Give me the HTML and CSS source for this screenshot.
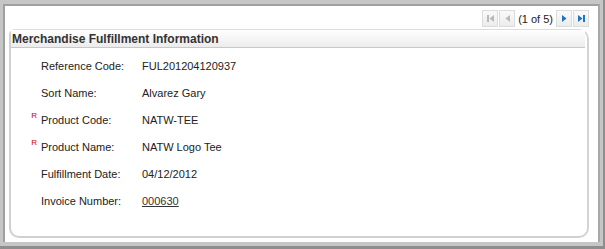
FILE: index.html
```html
<!DOCTYPE html>
<html>
<head>
<meta charset="utf-8">
<link rel="stylesheet" href="styles.css">
</head>
<body>
<div class="frame">
  <div class="inner">
    <div class="pager">
      <span class="pbtn disabled"><svg width="9" height="9" viewBox="0 0 9 9"><rect x="1" y="1" width="2" height="7" fill="#b9b9b9"/><path d="M8 1 L3.5 4.5 L8 8 Z" fill="#b9b9b9"/></svg></span>
      <span class="pbtn disabled"><svg width="9" height="9" viewBox="0 0 9 9"><path d="M7 1 L2.5 4.5 L7 8 Z" fill="#b9b9b9"/></svg></span>
      <span class="ptext">(1 of 5)</span>
      <span class="pbtn"><svg width="9" height="9" viewBox="0 0 9 9"><path d="M2 1 L6.5 4.5 L2 8 Z" fill="#1a74c9"/></svg></span>
      <span class="pbtn"><svg width="9" height="9" viewBox="0 0 9 9"><path d="M1 1 L5.5 4.5 L1 8 Z" fill="#1a74c9"/><rect x="6" y="1" width="2" height="7" fill="#1a74c9"/></svg></span>
    </div>
    <div class="panel">
      <div class="panel-head">Merchandise Fulfillment Information</div>
      <div class="rows">
        <div class="row"><span class="req"></span><span class="label">Reference Code:</span><span class="value">FUL201204120937</span></div>
        <div class="row"><span class="req"></span><span class="label">Sort Name:</span><span class="value">Alvarez Gary</span></div>
        <div class="row"><span class="req">R</span><span class="label">Product Code:</span><span class="value">NATW-TEE</span></div>
        <div class="row"><span class="req">R</span><span class="label">Product Name:</span><span class="value">NATW Logo Tee</span></div>
        <div class="row"><span class="req"></span><span class="label">Fulfillment Date:</span><span class="value">04/12/2012</span></div>
        <div class="row"><span class="req"></span><span class="label">Invoice Number:</span><span class="value"><a href="#" class="link">000630</a></span></div>
      </div>
    </div>
  </div>
</div>
</body>
</html>
```

FILE: styles.css
```css
html, body {
  margin: 0;
  padding: 0;
  background: #c6c6c6;
}
.frame {
  width: 605px;
  height: 249px;
  box-sizing: border-box;
  background: #c6c6c6;
  padding: 4px 0 0 3px;
  border-right: 2px solid #8e8e8e;
  border-bottom: 3px solid #8e8e8e;
}
.inner {
  width: 597px;
  height: 238px;
  box-sizing: border-box;
  background: #fff;
  border-top: 2px solid #a0a0a0;
  border-left: 2px solid #a0a0a0;
  border-right: 2px solid #a8a8a8;
  padding: 4px 9px 0 4px;
  font-family: "Liberation Sans", Arial, sans-serif;
  color: #222;
}
.pager {
  display: flex;
  justify-content: flex-end;
  align-items: center;
  gap: 1px;
  height: 17px;
}
.pbtn {
  width: 14px;
  height: 15px;
  border: 1px solid #dcdcdc;
  background: linear-gradient(#fafafa, #ececec);
  display: flex;
  align-items: center;
  justify-content: center;
}
.ptext {
  font-size: 11px;
  color: #222;
  padding: 0 2px 0 2px;
}
.panel {
  margin-top: 2px;
  height: 209px;
  box-sizing: border-box;
  border: 2px solid #d0d0d0;
  border-top: 1px solid #dcdcdc;
  border-radius: 6px 10px 10px 10px;
  border-right-color: #d4d4d4;
  padding: 0;
}
.panel-head {
  height: 17px;
  margin-right: 2px;
  background: linear-gradient(#ffffff, #ececec);
  border-bottom: 1px solid #c8c8c8;
  font-weight: bold;
  font-size: 12px;
  color: #333;
  line-height: 19px;
  padding-left: 1px;
}
.rows {
  padding-top: 4px;
}
.row {
  display: flex;
  align-items: center;
  height: 27px;
  font-size: 11px;
}
.req {
  width: 30px;
  box-sizing: border-box;
  text-align: right;
  padding-right: 4px;
  color: #c00;
  font-size: 8px;
  align-self: flex-start;
  margin-top: 5px;
}
.label {
  width: 101px;
}
.link {
  color: #333;
  text-decoration: underline;
}
```
